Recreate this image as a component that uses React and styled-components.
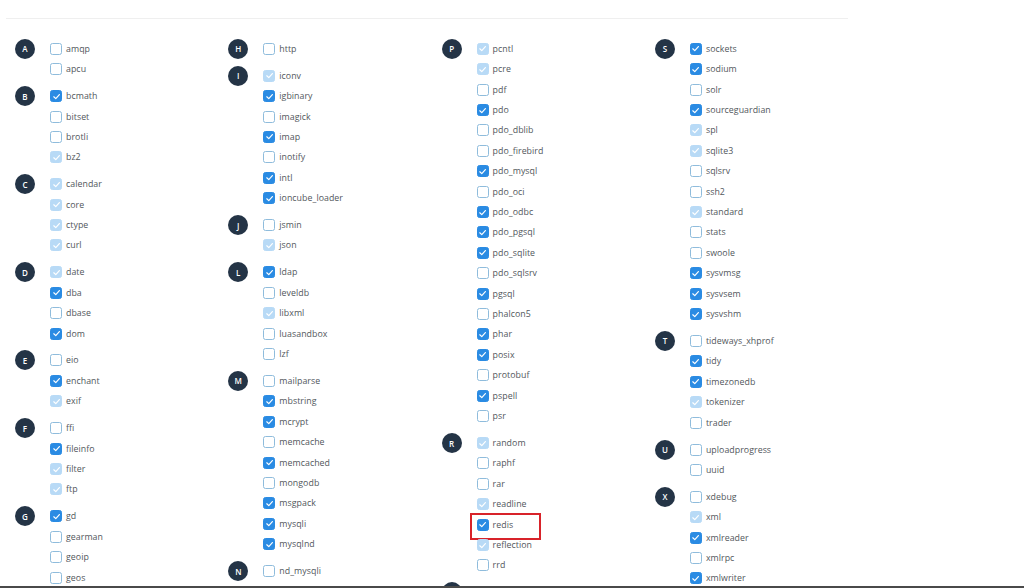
import React from "react";
import styled, { createGlobalStyle } from "styled-components";

const GlobalStyle = createGlobalStyle`
  html, body { margin: 0; padding: 0; background: #ffffff; }
  body { font-family: "Open Sans", "Noto Sans", sans-serif; }
  * { box-sizing: border-box; }
`;

const Page = styled.div`
  width: 1024px;
  height: 588px;
  display: flex;
  flex-direction: column;
  overflow: hidden;
  background: #fff;
`;

const TopRule = styled.div`
  height: 19px;
  margin-left: 6px;
  width: 842px;
  border-bottom: 1px solid #efefef;
  flex: none;
`;

const Content = styled.div`
  flex: 1;
  overflow: hidden;
  display: grid;
  grid-template-columns: repeat(4, 213.3px);
  padding: 19.6px 0 0 15px;
  align-items: start;
`;

const BottomBar = styled.div`
  height: 2px;
  background: #4a4a4a;
  flex: none;
`;

const Column = styled.div`
  display: flex;
  flex-direction: column;
  gap: 6.5px;
`;

const Group = styled.div`
  display: flex;
  align-items: flex-start;
`;

const Badge = styled.div`
  width: 20px;
  height: 20px;
  border-radius: 50%;
  background: #243446;
  color: #fff;
  font-size: 8px;
  font-weight: 600;
  display: flex;
  align-items: center;
  justify-content: center;
  flex: none;
  margin-top: 0.2px;
`;

const List = styled.div`
  display: flex;
  flex-direction: column;
  margin-left: 15px;
`;

const Row = styled.label`
  position: relative;
  display: flex;
  align-items: center;
  height: 20.42px;
  gap: 4px;
  font-size: 8.8px;
  color: #52575c;
  letter-spacing: 0.05px;
  &::after {
    content: "";
    display: ${(p) => (p.$highlight ? "block" : "none")};
    position: absolute;
    left: -7px;
    top: -1.5px;
    width: 67px;
    height: 23px;
    border: 2px solid #d8232a;
  }
`;

const Box = styled.span`
  width: 12px;
  height: 12px;
  border-radius: 2.5px;
  flex: none;
  display: flex;
  align-items: center;
  justify-content: center;
  background: ${(p) =>
    p.$state === "C" ? "#2a8be3" : p.$state === "D" ? "#b8daf6" : "#ffffff"};
  border: 1px solid
    ${(p) =>
      p.$state === "C" ? "#2a8be3" : p.$state === "D" ? "#b8daf6" : "#8fbcdc"};
`;

const Check = () => (
  <svg width="9" height="9" viewBox="0 0 10 10">
    <polyline
      points="2,5.3 4.2,7.4 8.2,2.8"
      fill="none"
      stroke="#fff"
      strokeWidth="1.3"
      strokeLinecap="round"
      strokeLinejoin="round"
    />
  </svg>
);

const columns = [
  [
    ["A", "amqp U, apcu U"],
    ["B", "bcmath C, bitset U, brotli U, bz2 D"],
    ["C", "calendar D, core D, ctype D, curl D"],
    ["D", "date D, dba C, dbase U, dom C"],
    ["E", "eio U, enchant C, exif D"],
    ["F", "ffi U, fileinfo C, filter D, ftp D"],
    ["G", "gd C, gearman U, geoip U, geos U"],
  ],
  [
    ["H", "http U"],
    ["I", "iconv D, igbinary C, imagick U, imap C, inotify U, intl C, ioncube_loader C"],
    ["J", "jsmin U, json D"],
    ["L", "ldap C, leveldb U, libxml D, luasandbox U, lzf U"],
    ["M", "mailparse U, mbstring C, mcrypt C, memcache U, memcached C, mongodb U, msgpack C, mysqli C, mysqlnd C"],
    ["N", "nd_mysqli U"],
  ],
  [
    ["P", "pcntl D, pcre D, pdf U, pdo C, pdo_dblib U, pdo_firebird U, pdo_mysql C, pdo_oci U, pdo_odbc C, pdo_pgsql C, pdo_sqlite C, pdo_sqlsrv U, pgsql C, phalcon5 U, phar C, posix C, protobuf U, pspell C, psr U"],
    ["R", "random D, raphf U, rar U, readline D, redis C, reflection D, rrd U"],
    ["S", ""],
  ],
  [
    ["S", "sockets C, sodium C, solr U, sourceguardian C, spl D, sqlite3 D, sqlsrv U, ssh2 U, standard D, stats U, swoole U, sysvmsg C, sysvsem C, sysvshm C"],
    ["T", "tideways_xhprof U, tidy C, timezonedb C, tokenizer D, trader U"],
    ["U", "uploadprogress U, uuid U"],
    ["X", "xdebug U, xml D, xmlreader C, xmlrpc U, xmlwriter C"],
  ],
];

const parse = (s) =>
  s
    ? s.split(",").map((t) => {
        const [name, state] = t.trim().split(" ");
        return { name, state };
      })
    : [];

export default function App() {
  return (
    <>
      <GlobalStyle />
      <Page>
        <TopRule />
        <Content>
          {columns.map((col, ci) => (
            <Column key={ci}>
              {col.map(([letter, items], gi) => (
                <Group key={gi}>
                  <Badge>{items ? letter : ""}</Badge>
                  <List>
                    {parse(items).map((it) => (
                      <Row key={it.name} $highlight={it.name === "redis"}>
                        <Box $state={it.state}>{it.state !== "U" && <Check />}</Box>
                        {it.name}
                      </Row>
                    ))}
                  </List>
                </Group>
              ))}
            </Column>
          ))}
        </Content>
        <BottomBar />
      </Page>
    </>
  );
}
